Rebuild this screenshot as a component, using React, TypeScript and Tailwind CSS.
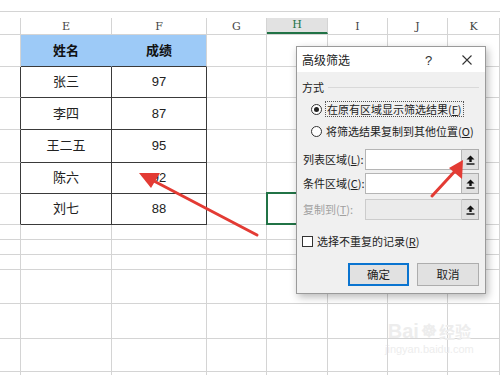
import React from "react";

const colW = ["w-[21px]", "w-[91px]", "w-[95px]", "w-[60px]", "w-[61px]", "w-[60px]", "w-[60px]", "w-[52px]"];
const letters = ["", "E", "F", "G", "H", "I", "J", "K"];
const rowH = ["h-[32px]", "h-[31px]", "h-[32px]", "h-[33px]", "h-[31px]", "h-[31px]", "h-[15px]", "h-[15px]", "h-[15px]", "h-[34px]", "h-[35px]", "h-[33px]", "h-[20px]"];
const data: [string, string][] = [
  ["张三", "97"],
  ["李四", "87"],
  ["王二五", "95"],
  ["陈六", "92"],
  ["刘七", "88"],
];

function cellClass(r: number, c: number): string {
  const inTable = r >= 1 && r <= 5;
  if (r === 0 && c === 1) return "bg-[#9dcaf7] border-r border-b border-r-[#9dcaf7] border-b-[#3a3a3a]";
  if (r === 0 && c === 2) return "bg-[#9dcaf7] border-r border-b border-r-[#d4d4d4] border-b-[#3a3a3a]";
  if (inTable && c === 0) return "border-r border-b border-r-[#3a3a3a] border-b-[#d4d4d4]";
  if (inTable && (c === 1 || c === 2)) return "border-r border-b border-[#3a3a3a]";
  return "border-r border-b border-[#d4d4d4]";
}

function UpIcon() {
  return (
    <svg width="9" height="10" viewBox="0 0 9 10">
      <path d="M4.5 0.5 L8.5 4.5 L5.7 4.5 L5.7 7 L3.3 7 L3.3 4.5 L0.5 4.5 Z" fill="#111" />
      <rect x="0.5" y="8.3" width="8" height="1.4" fill="#111" />
    </svg>
  );
}

function RangeRow({ label, u, disabled, extra }: { label: string; u: string; disabled?: boolean; extra?: string }) {
  return (
    <div className={"flex items-center h-[21px] " + (extra || "")}>
      <div className={disabled ? "w-[63px] text-[#a0a0a0] pl-px whitespace-nowrap" : "w-[63px] text-[#222] pl-px whitespace-nowrap"}>
        {label}(<span className="underline">{u}</span>):
      </div>
      <div className={disabled ? "w-[97px] h-[21px] bg-[#ebebeb] border border-[#cccccc]" : "w-[97px] h-[21px] bg-white border border-[#b5b5b5]"} />
      <div className="w-[17px] h-[21px] bg-[#e1e1e1] border border-[#adadad] border-l-0 flex items-center justify-center">
        <UpIcon />
      </div>
    </div>
  );
}

function Dialog() {
  return (
    <div
      className="absolute left-[296px] top-[46px] w-[190px] h-[248px] bg-[#f0f0f0] border border-[#9a9a9a] shadow-[2px_3px_8px_rgba(0,0,0,0.28)] text-[11px] text-[#222] whitespace-nowrap"
      style={{ fontFamily: '"Noto Sans CJK SC", "Noto Sans", sans-serif' }}
    >
      <div className="h-[25px] bg-white flex items-center pl-[5px] relative">
        <span className="text-[12px] text-[#222]">高级筛选</span>
        <span className="absolute left-[128px] top-[4px] text-[13px] text-[#333]" style={{ fontFamily: '"Liberation Sans", sans-serif' }}>?</span>
        <svg className="absolute left-[165px] top-[8px]" width="10" height="10" viewBox="0 0 10 10">
          <path d="M0.5 0.5 L9.5 9.5 M9.5 0.5 L0.5 9.5" stroke="#333" strokeWidth="1.1" />
        </svg>
      </div>
      <div className="pl-[5px] pr-[6px]">
        <div className="flex items-center h-[16px] mt-[7px]">
          <span>方式</span>
          <div className="flex-1 h-px bg-[#d9d9d9] ml-[4px]" />
        </div>
        <div className="flex items-center h-[18px] mt-[5px] pl-[9px]">
          <div className="w-[11px] h-[11px] rounded-full border border-[#333] bg-white flex items-center justify-center">
            <div className="w-[5px] h-[5px] rounded-full bg-[#222]" />
          </div>
          <span className="ml-[3px] px-[1px] border border-dotted border-[#555] leading-[14px]">
            在原有区域显示筛选结果(<span className="underline">F</span>)
          </span>
        </div>
        <div className="flex items-center h-[18px] mt-[4px] pl-[9px]">
          <div className="w-[11px] h-[11px] rounded-full border border-[#333] bg-white" />
          <span className="ml-[4px] leading-[14px]">
            将筛选结果复制到其他位置(<span className="underline">O</span>)
          </span>
        </div>
        <div className="mt-[9px] flex flex-col gap-[3px]">
          <RangeRow label="列表区域" u="L" />
          <RangeRow label="条件区域" u="C" />
          <RangeRow label="复制到" u="T" disabled extra="mt-[2px]" />
        </div>
        <div className="flex items-center mt-[14px] h-[14px]">
          <div className="w-[11px] h-[11px] border border-[#333] bg-white" />
          <span className="ml-[4px]">
            选择不重复的记录(<span className="underline">R</span>)
          </span>
        </div>
        <div className="flex justify-end gap-[8px] mt-[15px] text-[11.5px]">
          <div className="w-[61px] h-[23px] bg-[#e1e1e1] border-2 border-[#0a74d0] flex items-center justify-center">确定</div>
          <div className="w-[62px] h-[23px] bg-[#e1e1e1] border border-[#adadad] flex items-center justify-center">取消</div>
        </div>
      </div>
    </div>
  );
}

export default function App() {
  return (
    <div className="w-[500px] h-[375px] bg-white relative overflow-hidden" style={{ fontFamily: '"Liberation Sans", "Noto Sans CJK SC", sans-serif' }}>
      <div className="h-[12px] border-b border-[#d4d4d4]" />
      <div className="h-[6px]" />
      <div className="flex h-[17px] border-b border-[#d4d4d4]">
        {letters.map((l, c) => (
          <div
            key={c}
            className={
              c === 4
                ? "w-[61px] border-r border-[#d4d4d4] bg-[#e2e2e2] border-b-2 border-b-[#217346] flex items-end justify-center text-[11px] text-[#217346] leading-[14px]"
                : colW[c] + " border-r border-[#d4d4d4] flex items-end justify-center text-[11px] text-[#444] leading-[14px]"
            }
            style={{ fontFamily: '"DejaVu Serif", "Liberation Serif", serif' }}
          >
            {l}
          </div>
        ))}
      </div>
      {rowH.map((h, r) => (
        <div key={r} className={"flex " + h}>
          {colW.map((w, c) => {
            let content: React.ReactNode = null;
            if (r === 0 && c === 1) content = <span className="font-bold text-[13px] text-[#111]">姓名</span>;
            if (r === 0 && c === 2) content = <span className="font-bold text-[13px] text-[#111]">成绩</span>;
            if (r >= 1 && r <= 5 && c === 1) content = <span className="text-[13px] text-[#222]">{data[r - 1][0]}</span>;
            if (r >= 1 && r <= 5 && c === 2) content = <span className="text-[13px] text-[#222]">{data[r - 1][1]}</span>;
            return (
              <div key={c} className={w + " relative flex items-center justify-center " + cellClass(r, c)}>
                {content}
                {r === 5 && c === 4 ? (
                  <div className="absolute left-[-1px] top-[-2px] w-[63px] h-[33px] border-2 border-[#217346]" />
                ) : null}
              </div>
            );
          })}
        </div>
      ))}
      <Dialog />
      <div className="absolute left-[385px] top-[320px] flex flex-col items-center text-[#ededed]">
        <div className="flex items-end text-[20px] font-bold leading-[22px]" style={{ fontFamily: '"Liberation Sans", "Noto Sans CJK SC", sans-serif' }}>
          <span>Bai</span>
          <span className="mx-[2px] text-[18px]">☸</span>
          <span className="text-[16px]" style={{ fontFamily: '"Noto Sans CJK SC", sans-serif' }}>经验</span>
        </div>
        <div className="text-[11px] leading-[14px]">jingyan.baidu.com</div>
      </div>
      <svg className="absolute left-0 top-0 pointer-events-none" width="500" height="375" viewBox="0 0 500 375">
        <line x1="257" y1="235" x2="152" y2="180" stroke="#e33b34" strokeWidth="3" strokeLinecap="round" />
        <polygon points="139,173 160,173 151,188" fill="#e33b34" />
        <line x1="432" y1="196" x2="456" y2="170" stroke="#e33b34" strokeWidth="3" strokeLinecap="round" />
        <polygon points="463,160 462,179 449,168" fill="#e33b34" />
      </svg>
    </div>
  );
}
